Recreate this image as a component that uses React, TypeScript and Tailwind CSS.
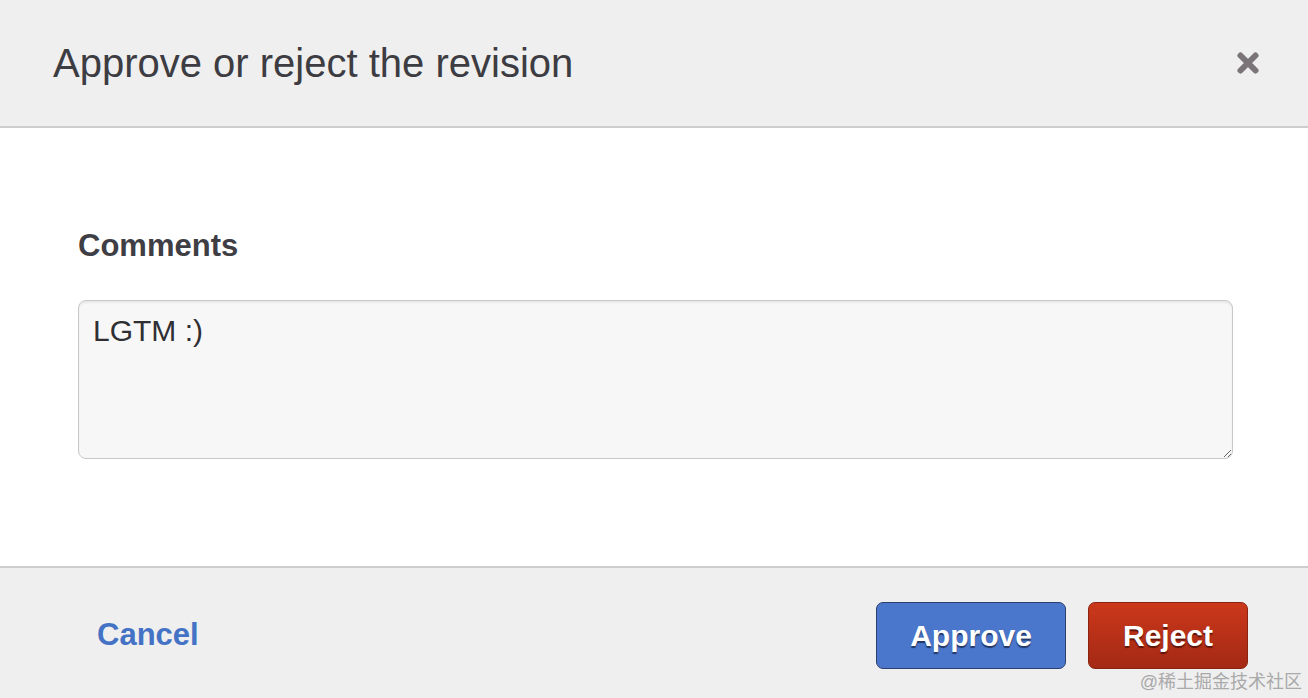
import React from "react";

export default function App() {
  return (
    <div
      className="relative flex h-[698px] w-[1308px] flex-col overflow-hidden bg-white"
      style={{ fontFamily: '"Liberation Sans", Arial, sans-serif' }}
    >
      <div className="flex h-[128px] shrink-0 items-center justify-between border-b-2 border-[#cdcdcd] bg-[#efefef] pl-[53px] pr-[48px]">
        <h1 className="text-[40px] font-normal leading-none text-[#3c3c42]">
          Approve or reject the revision
        </h1>
        <button className="flex h-[24px] w-[24px] items-center justify-center">
          <svg width="24" height="24" viewBox="0 0 24 24">
            <path
              d="M4.5 4.5 L19.5 19.5 M19.5 4.5 L4.5 19.5"
              stroke="#7a7478"
              strokeWidth="6"
              strokeLinecap="round"
              fill="none"
            />
          </svg>
        </button>
      </div>

      <div className="flex flex-1 flex-col pl-[78px] pr-[75px] pt-[103px]">
        <label className="text-[31px] font-bold leading-[30px] text-[#3e3e44]">Comments</label>
        <textarea
          defaultValue="LGTM :)"
          className="mt-[39px] h-[159px] w-full rounded-[8px] border border-[#c8c8c8] bg-[#f7f7f7] px-[14px] pt-[12px] text-[30px] leading-[1.2] text-[#2f2f33] shadow-[inset_0_2px_2px_rgba(0,0,0,0.06)] outline-none"
          style={{ fontFamily: '"Liberation Sans", Arial, sans-serif' }}
        />
      </div>

      <div className="flex h-[132px] shrink-0 items-start justify-between border-t-2 border-[#cdcdcd] bg-[#efefef] pl-[97px] pr-[60px] pt-[34px]">
        <button className="mt-[18px] text-[31px] font-bold leading-[30px] text-[#4472c4]">
          Cancel
        </button>
        <div className="flex gap-[22px]">
          <button className="h-[67px] w-[190px] rounded-[7px] border border-[#2d3f6e] bg-[#4a77cc] text-[30px] font-bold text-white [text-shadow:0_2px_1px_rgba(20,30,60,0.7)]">
            Approve
          </button>
          <button className="h-[67px] w-[160px] rounded-[7px] border border-[#8a2411] bg-gradient-to-b from-[#cb381b] to-[#a42914] text-[30px] font-bold text-white [text-shadow:0_2px_1px_rgba(60,10,0,0.7)]">
            Reject
          </button>
        </div>
      </div>

      <div
        className="absolute bottom-[5px] right-[6px] text-[18px] leading-[22px] text-[#a9a9a9]"
        style={{ fontFamily: '"Liberation Sans", "Noto Sans CJK SC", sans-serif' }}
      >
        @稀土掘金技术社区
      </div>
    </div>
  );
}
